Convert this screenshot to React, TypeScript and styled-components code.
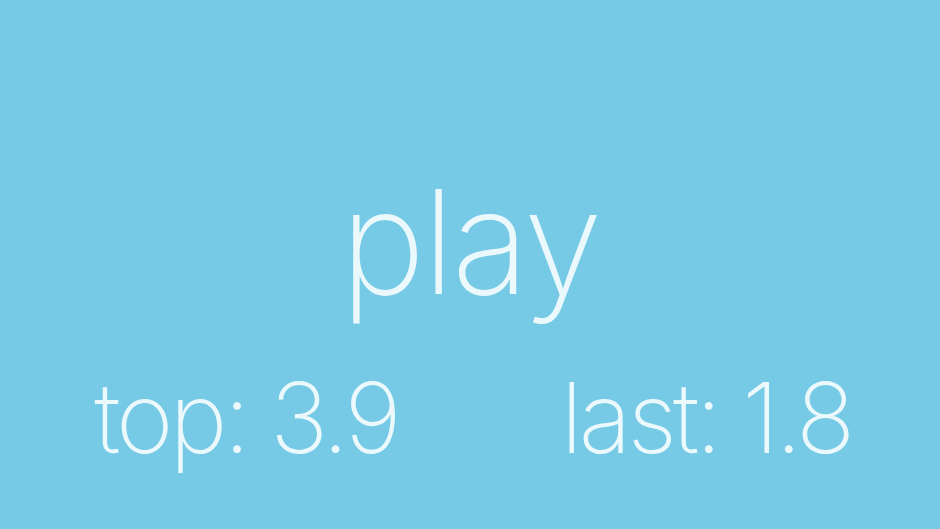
import React from 'react';
import styled, { createGlobalStyle } from 'styled-components';

const GlobalStyle = createGlobalStyle`
  html, body {
    margin: 0;
    padding: 0;
    background: #76cae5;
  }
`;

const Screen = styled.div`
  width: 940px;
  height: 529px;
  padding-top: 170px;
  box-sizing: border-box;
  background: #76cae5;
  color: #ebf9fd;
  font-family: 'Inter', 'Segoe UI', sans-serif;
  font-weight: 150;
  display: flex;
  flex-direction: column;
  overflow: hidden;
`;

const PlayButton = styled.div`
  text-align: center;
  font-size: 144px;
  line-height: 144px;
  letter-spacing: -3px;
  cursor: pointer;
`;

const Scores = styled.div`
  display: grid;
  grid-template-columns: 1fr 1fr;
  margin-top: 55px;
  padding: 0 4px 0 16px;
`;

const Score = styled.div`
  text-align: center;
  font-size: 98px;
  line-height: 98px;
  letter-spacing: -4px;
  white-space: nowrap;
`;

export default function App() {
  return (
    <>
      <GlobalStyle />
      <Screen>
        <PlayButton>play</PlayButton>
        <Scores>
          <Score>top: 3.9</Score>
          <Score>last: 1.8</Score>
        </Scores>
      </Screen>
    </>
  );
}
